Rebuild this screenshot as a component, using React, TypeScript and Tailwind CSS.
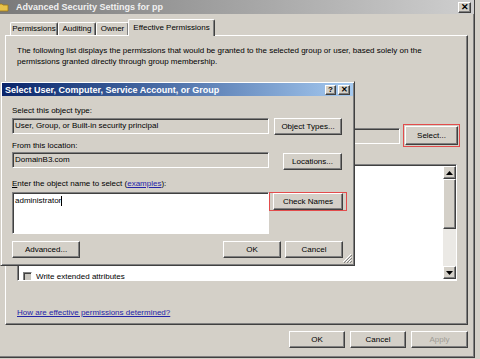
import React from "react"

const raised =
  "border border-t-white border-l-white border-r-[#404040] border-b-[#404040] shadow-[inset_-1px_-1px_0_#808080] bg-[#d4d0c8]"
const sunken =
  "border border-t-[#808080] border-l-[#808080] border-r-white border-b-white shadow-[inset_1px_1px_0_#404040]"

function Btn({
  children,
  className = "",
  disabled = false,
}: {
  children: React.ReactNode
  className?: string
  disabled?: boolean
}) {
  return (
    <div
      className={`${raised} flex items-center justify-center shrink-0 ${
        disabled ? "text-[#a09d96]" : "text-black"
      } ${className}`}
    >
      {children}
    </div>
  )
}

function Tab({ label, w, active = false }: { label: string; w: string; active?: boolean }) {
  return (
    <div
      className={`${w} ${
        active ? "h-[17px] -mb-px -ml-px relative z-10 bg-[#d4d0c8]" : "h-[13px]"
      } border-t border-l border-r border-t-white border-l-white border-r-[#404040] shadow-[inset_-1px_0_0_#808080] rounded-t-[2px] flex items-center justify-center shrink-0`}
    >
      {label}
    </div>
  )
}

export default function App() {
  return (
    <div className="w-[480px] h-[359px] bg-[#d4d0c8] relative overflow-hidden font-['Liberation_Sans',Arial,sans-serif] text-[8px] leading-[10px] text-black">
      {/* Outer window */}
      <div className="w-[475px] h-[358px] flex flex-col border-r border-b border-[#404040] shadow-[inset_-1px_-1px_0_#808080]">
        {/* title bar */}
        <div className="h-[14px] flex items-center bg-linear-to-r from-[#7a7a7a] to-[#cfcfcf] pr-[3px] shrink-0">
          <svg width="9" height="10" viewBox="0 0 9 10" className="shrink-0">
            <path d="M-3 2h5l1 1h5v6h-11z" fill="#e8c24a" stroke="#a07a18" strokeWidth="0.8" />
          </svg>
          <span className="ml-[7px] font-bold text-[#f0f0f0] text-[9px]">Advanced Security Settings for pp</span>
          <Btn className="ml-auto w-[13px] h-[11px] font-bold text-[9px]">✕</Btn>
        </div>

        {/* tabs */}
        <div className="h-[21px] flex items-end pl-[10px] shrink-0">
          <Tab label="Permissions" w="w-[48px]" />
          <Tab label="Auditing" w="w-[38px]" />
          <Tab label="Owner" w="w-[33px]" />
          <Tab label="Effective Permissions" w="w-[87px]" active />
        </div>

        {/* tab panel */}
        <div className="ml-[5px] w-[463px] h-[290px] shrink-0 border border-t-white border-l-white border-r-[#404040] border-b-[#404040] shadow-[inset_-1px_-1px_0_#808080] flex flex-col">
          <p className="pt-[9px] pl-[11px] leading-[11px]">
            The following list displays the permissions that would be granted to the selected group or user, based solely on the
            <br />
            permissions granted directly through group membership.
          </p>

          <div className="mt-[57px] h-[23px] flex items-center pl-[11px]">
            <div className={`${sunken} w-[383px] h-[16px]`} />
            <div className="ml-[3px] w-[57px] h-[23px] border border-[#e34c4c] p-px">
              <Btn className="w-[53px] h-[19px]">Select...</Btn>
            </div>
          </div>

          {/* permissions list */}
          <div className={`${sunken} mt-[17px] ml-[11px] w-[440px] h-[117px] bg-white flex`}>
            <div className="flex-1 flex flex-col justify-end overflow-hidden pl-[5px]">
              <div className="h-[13px] -mb-[3px] flex items-center gap-[4px]">
                <div className={`${sunken} w-[9px] h-[9px] bg-[#c8c5be]`} />
                <span>Write extended attributes</span>
              </div>
            </div>
            <div className="w-[13px] flex flex-col mt-px mb-px">
              <Btn className="h-[13px]">
                <svg width="7" height="4" viewBox="0 0 7 4"><path d="M3.5 0L7 4H0z" fill="#000" /></svg>
              </Btn>
              <Btn className="h-[50px]">{""}</Btn>
              <div className="flex-1 bg-[#ebe9e5]" />
              <Btn className="h-[13px]">
                <svg width="7" height="4" viewBox="0 0 7 4"><path d="M0 0h7L3.5 4z" fill="#000" /></svg>
              </Btn>
            </div>
          </div>

          <div className="mt-[27px] pl-[11px]">
            <span className="underline text-[#2424a8]">How are effective permissions determined?</span>
          </div>
        </div>

        {/* bottom buttons */}
        <div className="mt-[6px] flex gap-[5px] pl-[289px]">
          <Btn className="w-[56px] h-[17px]">OK</Btn>
          <Btn className="w-[56px] h-[17px]">Cancel</Btn>
          <Btn className="w-[57px] h-[17px]" disabled>
            Apply
          </Btn>
        </div>
      </div>

      {/* Select User dialog */}
      <div className="absolute left-0 top-[81px] w-[355px] h-[185px] bg-[#d4d0c8] border border-t-[#d4d0c8] border-l-[#d4d0c8] border-r-[#404040] border-b-[#404040] shadow-[inset_1px_1px_0_#fff,inset_-1px_-1px_0_#808080] p-px flex flex-col">
        <div className="h-[13px] shrink-0 flex items-center bg-linear-to-r from-[#0a246a] to-[#a6caf0] pl-[3px] pr-[3px]">
          <span className="font-bold text-white text-[9px]">Select User, Computer, Service Account, or Group</span>
          <Btn className="ml-auto w-[11px] h-[10px] font-bold text-[8px]">?</Btn>
          <Btn className="ml-[2px] w-[12px] h-[10px] font-bold text-[8px]">✕</Btn>
        </div>

        <div className="mt-[10px] ml-[10px] h-[10px]">Select this object type:</div>
        <div className="mt-[2px] ml-[10px] flex items-start">
          <div className={`${sunken} w-[257px] h-[16px] flex items-center pl-[2px]`}>
            User, Group, or Built-in security principal
          </div>
          <Btn className="ml-[5px] w-[68px] h-[17px]">Object Types...</Btn>
        </div>

        <div className="mt-[6px] ml-[10px] h-[10px]">From this location:</div>
        <div className="mt-px ml-[10px] flex items-start">
          <div className={`${sunken} w-[257px] h-[16px] flex items-center pl-[2px]`}>DomainB3.com</div>
          <Btn className="ml-[14px] mt-px w-[59px] h-[17px]">Locations...</Btn>
        </div>

        <div className="mt-[9px] ml-[10px] h-[10px]">
          <span className="underline">E</span>nter the object name to select (
          <span className="underline text-[#2424a8]">examples</span>):
        </div>
        <div className="mt-[3px] ml-[10px] flex items-start">
          <div className={`${sunken} w-[257px] h-[42px] bg-white pl-[2px] pt-[3px] flex items-start`}>
            <span>administrator</span>
            <span className="w-px h-[10px] bg-black" />
          </div>
          <div className="w-[78px] h-[19px] border border-[#e34c4c] pl-[3px]">
            <Btn className="w-[70px] h-[17px]">Check Names</Btn>
          </div>
        </div>

        <div className="mt-[7px] ml-[10px] flex">
          <Btn className="w-[68px] h-[17px]">Advanced...</Btn>
          <Btn className="ml-[143px] w-[58px] h-[17px]">OK</Btn>
          <Btn className="ml-[4px] w-[58px] h-[17px]">Cancel</Btn>
        </div>

        <svg width="10" height="10" viewBox="0 0 10 10" className="absolute right-[2px] bottom-[2px]">
          <path d="M9 1L1 9M9 4L4 9M9 7L7 9" stroke="#fff" strokeWidth="1" />
          <path d="M10 2L2 10M10 5L5 10M10 8L8 10" stroke="#808080" strokeWidth="1" />
        </svg>
      </div>
    </div>
  )
}
